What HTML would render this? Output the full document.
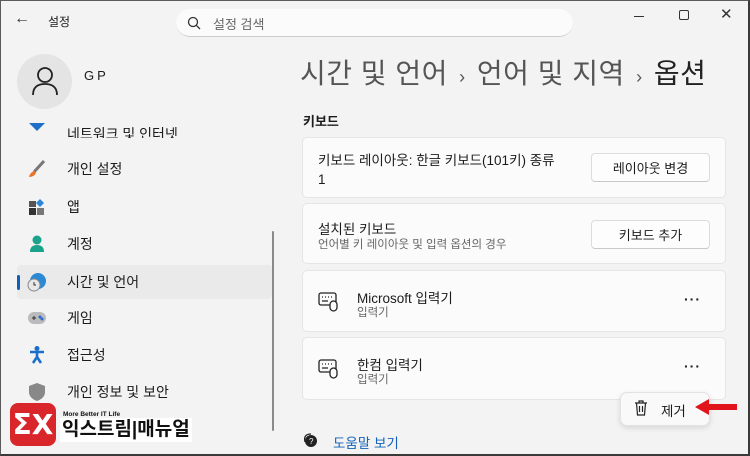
<!DOCTYPE html>
<html><head><meta charset="utf-8"><style>
*{box-sizing:border-box;margin:0;padding:0}
body{width:750px;height:456px;overflow:hidden;background:#f3f3f3;font-family:"Liberation Sans","Noto Sans CJK KR",sans-serif;color:#1b1b1b;position:relative}
.frame{position:absolute;inset:0;border:1px solid #5a5a5a;border-right:2px solid #3a3a3a;border-bottom:2px solid #3a3a3a;pointer-events:none;z-index:9}
.abs{position:absolute}
.nav{position:absolute;left:17px;width:255px;height:34px;display:flex;align-items:center;font-size:14px}
.nav .ic{width:20px;height:20px;margin-left:10px;margin-right:20px;display:flex;align-items:center;justify-content:center}
.card{position:absolute;left:302px;width:424px;background:#fbfbfb;border:1px solid #e5e5e5;border-radius:5px}
.btn{position:absolute;left:591px;width:119px;height:29px;background:#fdfdfd;border:1px solid #dcdcdc;border-bottom-color:#c8c8c8;border-radius:4px;font-size:13px;display:flex;align-items:center;justify-content:center}
.t{font-size:13.5px}
.s{font-size:11.5px;color:#666}
.dots{position:absolute;left:684px;font-size:14px;font-weight:bold;letter-spacing:1px}
</style></head><body>
<div class="frame"></div>
<div class="abs" style="left:14px;top:10px;font-size:16px;color:#333">←</div>
<div class="abs" style="left:48px;top:13px;font-size:12px">설정</div>
<div class="abs" style="left:176px;top:9px;width:397px;height:28px;background:#fbfbfb;border-radius:14px;border-bottom:1px solid #ccc"></div>
<svg class="abs" style="left:187px;top:16px" width="14" height="14"><circle cx="6" cy="6" r="4.5" fill="none" stroke="#333" stroke-width="1.3"/><line x1="9.3" y1="9.3" x2="13" y2="13" stroke="#333" stroke-width="1.3"/></svg>
<div class="abs" style="left:213px;top:14px;font-size:13px;color:#666">설정 검색</div>
<div class="abs" style="left:634px;top:16px;width:10px;height:1px;background:#333"></div>
<div class="abs" style="left:679px;top:10px;width:10px;height:10px;border:1px solid #333;border-radius:2px"></div>
<div class="abs" style="left:720px;top:5px;font-size:15px;color:#333">✕</div>
<div class="abs" style="left:17px;top:54px;width:55px;height:55px;border-radius:50%;background:#e4e4e4"></div>
<svg class="abs" style="left:31px;top:66px" width="28" height="30"><circle cx="14" cy="9" r="7" fill="none" stroke="#222" stroke-width="1.8"/><path d="M2 29 Q2 18 14 18 Q26 18 26 29" fill="none" stroke="#222" stroke-width="1.8"/></svg>
<div class="abs" style="left:84px;top:68px;font-size:13px;letter-spacing:3px">GP</div>
<div class="nav" style="top:118px;height:20px;overflow:hidden;align-items:flex-end"><div class="ic"><svg width="16" height="10"><path d="M0 0 L16 0 L8 8Z" fill="#1f6fc8"/></svg></div><span style="position:relative;top:6px">네트워크 및 인터넷</span></div>
<div class="nav" style="top:152px"><div class="ic"><svg width="18" height="18"><path d="M16 1 L6 12" stroke="#777" stroke-width="3"/><path d="M7 11 Q2 12 1 17 Q6 17 8 13Z" fill="#e8762a"/></svg></div>개인 설정</div>
<div class="nav" style="top:190px"><div class="ic"><svg width="16" height="16"><rect x="0" y="2" width="7" height="6" fill="#555"/><rect x="0" y="9" width="7" height="7" fill="#333"/><rect x="8" y="9" width="7" height="7" fill="#777"/><path d="M11 0 L15 4 L11 8 L7 4Z" fill="#2a86d9"/></svg></div>앱</div>
<div class="nav" style="top:227px"><div class="ic"><svg width="16" height="18"><circle cx="8" cy="5" r="4.5" fill="#1aa28a"/><path d="M1 17 Q1 10 8 10 Q15 10 15 17Z" fill="#1aa28a"/></svg></div>계정</div>
<div class="nav" style="top:265px;background:#eaeaea;border-radius:4px"><div class="abs" style="left:0;top:10px;width:3px;height:15px;background:#0f5fb8;border-radius:2px"></div><div class="ic"><svg width="20" height="20"><circle cx="11" cy="9" r="8" fill="#2a8ad6"/><circle cx="7" cy="13" r="6" fill="#e8e8e8" stroke="#888"/><path d="M7 10 L7 13 L9 13" stroke="#333" fill="none"/></svg></div>시간 및 언어</div>
<div class="nav" style="top:301px"><div class="ic"><svg width="18" height="12"><rect x="0" y="0" width="18" height="12" rx="6" fill="#bbb"/><circle cx="12" cy="5" r="1.5" fill="#2a6ad0"/><circle cx="14" cy="7" r="1.5" fill="#2a6ad0"/><path d="M4 6h4M6 4v4" stroke="#333"/></svg></div>게임</div>
<div class="nav" style="top:338px"><div class="ic"><svg width="16" height="18"><circle cx="8" cy="2.5" r="2.5" fill="#1a6fc8"/><path d="M1 6 L15 6 M8 6 L8 11 L4 17 M8 11 L12 17" stroke="#1a6fc8" stroke-width="2.6" fill="none"/></svg></div>접근성</div>
<div class="nav" style="top:375px"><div class="ic"><svg width="16" height="18"><path d="M8 0 L16 3 L16 9 Q16 15 8 18 Q0 15 0 9 L0 3Z" fill="#888"/></svg></div>개인 정보 및 보안</div>
<div class="abs" style="left:272px;top:231px;width:2px;height:200px;background:#8a8a8a;border-radius:1px"></div>
<div class="abs" style="left:10px;top:403px;width:46px;height:43px;background:#d8262a;border-radius:8px;color:#fff;font-weight:bold;font-size:28px;display:flex;align-items:center;justify-content:center;font-family:'DejaVu Sans',sans-serif">ΣX</div>
<div class="abs" style="left:63px;top:411px;font-size:6.5px;font-weight:bold;color:#111">More Better IT Life</div>
<div class="abs" style="left:60px;top:418px;font-size:19px;font-weight:bold;color:#111;background:#fff;padding:0 2px;line-height:24px">익스트림|매뉴얼</div>
<div class="abs" style="left:300px;top:52px;font-size:28px;color:#222;white-space:nowrap;letter-spacing:0.5px"><span style="color:#555">시간 및 언어 <span style="font-size:18px;margin:0 3px">›</span> 언어 및 지역 <span style="font-size:18px;margin:0 3px">›</span></span> 옵션</div>
<div class="abs" style="left:303px;top:111px;font-size:13px;font-weight:bold">키보드</div>
<div class="card" style="top:137px;height:61px"></div>
<div class="abs t" style="left:318px;top:151px;line-height:19px">키보드 레이아웃: 한글 키보드(101키) 종류<br>1</div>
<div class="btn" style="top:153px">레이아웃 변경</div>
<div class="card" style="top:203px;height:61px"></div>
<div class="abs t" style="left:318px;top:218px">설치된 키보드</div>
<div class="abs s" style="left:318px;top:236px">언어별 키 레이아웃 및 입력 옵션의 경우</div>
<div class="btn" style="top:220px">키보드 추가</div>
<div class="card" style="top:270px;height:62px"></div>
<svg class="abs" style="left:318px;top:292px" width="22" height="20"><rect x="1" y="1" width="17" height="12" rx="2" fill="none" stroke="#222" stroke-width="1.3"/><path d="M4 5h1M7 5h1M10 5h1M13 5h1M4 9h6" stroke="#222" stroke-width="1.3"/><rect x="12" y="9" width="7" height="10" rx="3.5" fill="#fbfbfb" stroke="#222" stroke-width="1.3"/></svg>
<div class="abs t" style="left:357px;top:287px">Microsoft 입력기</div>
<div class="abs s" style="left:357px;top:304px">입력기</div>
<div class="dots" style="top:291px">···</div>
<div class="card" style="top:337px;height:63px"></div>
<svg class="abs" style="left:318px;top:359px" width="22" height="20"><rect x="1" y="1" width="17" height="12" rx="2" fill="none" stroke="#222" stroke-width="1.3"/><path d="M4 5h1M7 5h1M10 5h1M13 5h1M4 9h6" stroke="#222" stroke-width="1.3"/><rect x="12" y="9" width="7" height="10" rx="3.5" fill="#fbfbfb" stroke="#222" stroke-width="1.3"/></svg>
<div class="abs t" style="left:357px;top:354px">한컴 입력기</div>
<div class="abs s" style="left:357px;top:371px">입력기</div>
<div class="dots" style="top:358px">···</div>
<div class="abs" style="left:620px;top:392px;width:90px;height:34px;background:#f9f9f9;border:1px solid #e2e2e2;border-radius:7px;box-shadow:0 2px 6px rgba(0,0,0,.12)"></div>
<svg class="abs" style="left:634px;top:400px" width="14" height="16"><path d="M1 3h12M5 3V1h4v2M2.5 3l1 12h7l1-12M5.5 6v6M8.5 6v6" fill="none" stroke="#222" stroke-width="1.2"/></svg>
<div class="abs" style="left:661px;top:400px;font-size:13.5px">제거</div>
<svg class="abs" style="left:695px;top:398px" width="44" height="18"><path d="M0 9 L14 1 L14 6 L42 6 L42 12 L14 12 L14 17Z" fill="#e0141a"/></svg>
<svg class="abs" style="left:302px;top:432px" width="16" height="16"><circle cx="9" cy="9" r="6" fill="#222"/><path d="M3 10 Q1 2 9 2" fill="none" stroke="#222" stroke-width="1.3"/><text x="7" y="12" font-size="8" fill="#fff">?</text></svg>
<div class="abs" style="left:333px;top:432px;font-size:13.5px;color:#1260b8">도움말 보기</div>
</body></html>
